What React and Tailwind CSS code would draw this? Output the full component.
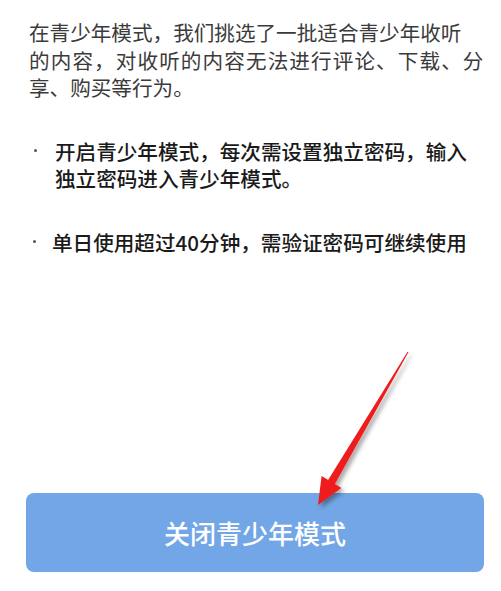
export default function App() {
  const font = { fontFamily: '"Noto Sans CJK SC", "Noto Sans", sans-serif' };

  return (
    <div className="relative w-[501px] h-[591px] bg-white overflow-hidden" style={font}>
      {/* Intro paragraph */}
      <div className="pl-[29px] pt-[19px] text-[20.6px] leading-[27.5px] text-[#3b3b3b]">
        <div className="whitespace-nowrap">在青少年模式，我们挑选了一批适合青少年收听</div>
        <div className="whitespace-nowrap tracking-[1.1px]">的内容，对收听的内容无法进行评论、下载、分</div>
        <div className="whitespace-nowrap">享、购买等行为。</div>
      </div>

      {/* Bullet 1 */}
      <div className="flex mt-9 text-[20.6px] leading-[27.5px] text-[#1a1a1a] font-medium">
        <div className="w-[55px] shrink-0 relative">
          <span className="absolute left-[34px] top-[11px] w-[3px] h-[3px] rounded-full bg-[#555]" />
        </div>
        <div>
          <div className="whitespace-nowrap">开启青少年模式，每次需设置独立密码，输入</div>
          <div className="whitespace-nowrap">独立密码进入青少年模式。</div>
        </div>
      </div>

      {/* Bullet 2 */}
      <div className="flex mt-9 text-[20.6px] leading-[27.5px] text-[#1a1a1a] font-medium">
        <div className="w-[52px] shrink-0 relative">
          <span className="absolute left-[33px] top-[11px] w-[3px] h-[3px] rounded-full bg-[#555]" />
        </div>
        <div className="whitespace-nowrap">单日使用超过40分钟，需验证密码可继续使用</div>
      </div>

      {/* Button */}
      <div className="absolute left-[26px] top-[493px] w-[458px] h-[79px] rounded-[8px] bg-[#73a6e6] flex items-center justify-center">
        <span className="text-white text-[26px] font-medium">关闭青少年模式</span>
      </div>

      {/* Red annotation arrow */}
      <svg className="absolute left-0 top-0 pointer-events-none" width="501" height="591" viewBox="0 0 501 591">
        <defs>
          <filter id="sh" x="-20%" y="-20%" width="140%" height="140%">
            <feDropShadow dx="3" dy="3" stdDeviation="2" floodColor="#000" floodOpacity="0.35" />
          </filter>
        </defs>
        <polygon
          filter="url(#sh)"
          fill="#ee1c1c"
          points="407.6,351.8 408.4,352.2 334.9,484 341.4,487.9 318,505 321.6,476.1 328.1,480"
        />
      </svg>
    </div>
  );
}
